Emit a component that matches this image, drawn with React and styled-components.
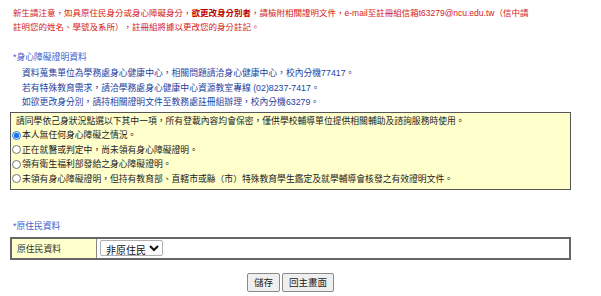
import React, { useState } from 'react';
import styled, { createGlobalStyle } from 'styled-components';

const GlobalStyle = createGlobalStyle`
  html, body {
    margin: 0;
    padding: 0;
    background: #ffffff;
  }
  body {
    font-family: "Liberation Sans", "Noto Sans CJK TC", sans-serif;
  }
`;

const Page = styled.div`
  width: 561px;
  padding: 6px 0 0 10px;
  font-size: 8.8px;
`;

const Notice = styled.p`
  margin: 0 0 0 3px;
  white-space: nowrap;
  font-size: 8.5px;
  color: #d42020;
  line-height: 14px;
`;

const Strong = styled.b`
  color: #c00000;
`;

const SectionTitle = styled.div`
  margin: ${p => p.$top}px 0 1.5px 3px;
  color: #3b5fd0;
  line-height: 14.5px;
`;

const InfoList = styled.div`
  margin-left: 12px;
  color: #1e3f9e;
  line-height: 14.5px;
`;

const ChoiceBox = styled.div`
  margin-top: 2px;
  border: 1px solid #555;
  background: #ffffcc;
  padding: 1px 4px 3px 1px;
  line-height: 14.5px;
  color: #222;
`;

const Intro = styled.div`
  padding-left: 4px;
`;

const Option = styled.label`
  display: flex;
  align-items: center;
  gap: 1px;
`;

const Radio = styled.input`
  margin: 0;
  width: 9px;
  height: 9px;
  accent-color: #1a73e8;
`;

const Table = styled.table`
  margin-top: 3px;
  width: 561px;
  border-collapse: collapse;
  border: 2px solid #666;
`;

const LabelCell = styled.td`
  width: 79px;
  height: 19px;
  padding: 0 0 0 5px;
  background: #ffffcc;
  border: 1px solid #888;
  color: #333;
`;

const FieldCell = styled.td`
  padding: 0 0 0 3px;
  border: 1px solid #888;
`;

const Select = styled.select`
  font-family: "Noto Sans CJK TC", "Liberation Sans", sans-serif;
  font-size: 10px;
  height: 16px;
  padding: 0 0 0 1px;
  border: 1px solid #b0b0b0;
  border-radius: 2px;
  background: #fff;
  color: #111;
`;

const Actions = styled.div`
  display: flex;
  justify-content: center;
  gap: 2px;
  margin-top: 13px;
`;

const Button = styled.button`
  font-family: "Noto Sans CJK TC", "Liberation Sans", sans-serif;
  font-size: 9.5px;
  height: 19px;
  padding: 0 6px;
  border: 1px solid #8a8a8a;
  border-radius: 2px;
  background: #efefef;
  color: #222;
`;

const options = [
  '本人無任何身心障礙之情況。',
  '正在就醫或判定中，尚未領有身心障礙證明。',
  '領有衛生福利部發給之身心障礙證明。',
  '未領有身心障礙證明，但持有教育部、直轄市或縣（市）特殊教育學生鑑定及就學輔導會核發之有效證明文件。',
];

export default function App() {
  const [choice, setChoice] = useState(0);
  return (
    <>
      <GlobalStyle />
      <Page>
        <Notice>
          新生請注意，如具原住民身分或身心障礙身分，<Strong>欲更改身分別者</Strong>，請檢附相關證明文件，e-mail至註冊組信箱t63279@ncu.edu.tw（信中請
          <br />
          註明您的姓名、學號及系所），註冊組將據以更改您的身分註記。
        </Notice>

        <SectionTitle $top={16}>*身心障礙證明資料</SectionTitle>
        <InfoList>
          <div>資料蒐集單位為學務處身心健康中心，相關問題請洽身心健康中心，校內分機77417。</div>
          <div>若有特殊教育需求，請洽學務處身心健康中心資源教室專線 (02)8237-7417。</div>
          <div>如欲更改身分別，請持相關證明文件至教務處註冊組辦理，校內分機63279。</div>
        </InfoList>

        <ChoiceBox>
          <Intro>請同學依己身狀況點選以下其中一項，所有登載內容均會保密，僅供學校輔導單位提供相關輔助及諮詢服務時使用。</Intro>
          {options.map((text, i) => (
            <Option key={i}>
              <Radio
                type="radio"
                name="disability"
                checked={choice === i}
                onChange={() => setChoice(i)}
              />
              {text}
            </Option>
          ))}
        </ChoiceBox>

        <SectionTitle $top={29}>*原住民資料</SectionTitle>
        <Table>
          <tbody>
            <tr>
              <LabelCell>原住民資料</LabelCell>
              <FieldCell>
                <Select defaultValue="none">
                  <option value="none">非原住民</option>
                  <option value="yes">原住民</option>
                </Select>
              </FieldCell>
            </tr>
          </tbody>
        </Table>

        <Actions>
          <Button>儲存</Button>
          <Button>回主畫面</Button>
        </Actions>
      </Page>
    </>
  );
}
